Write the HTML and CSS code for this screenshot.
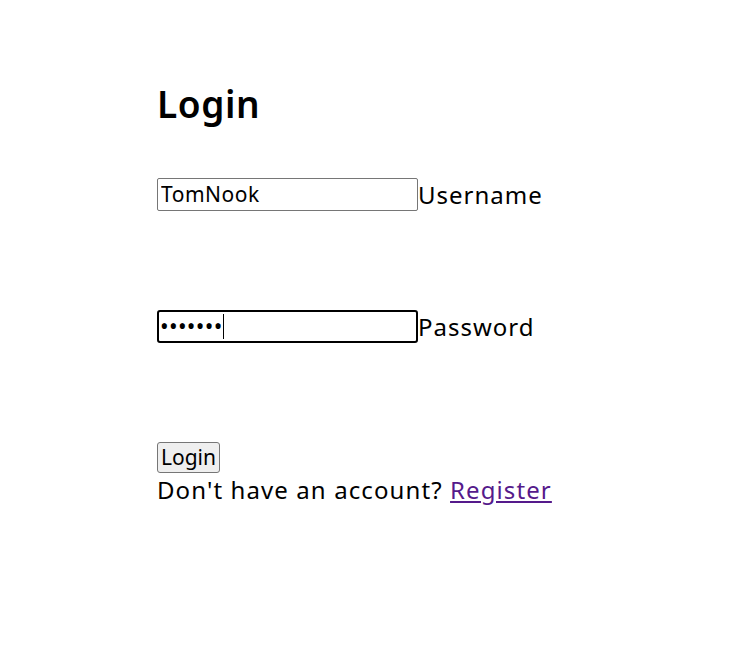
FILE: index.html
```html
<!DOCTYPE html>
<html lang="en">

<head>
    <meta charset="UTF-8">
    <meta name="viewport" content="width=device-width, initial-scale=1.0">
    <title>Login</title>

    <link rel="stylesheet" href="styles.css">

</head>

<body>
<div class="login-page">
  <h1>Login</h1>

  <form class="login-form">
    <!-- username -->
    <div class="field">
      <input type="text" id="username" class="text-input" value="TomNook" />
      <label for="username">Username</label>
    </div>

    <!-- password (active box, with the text caret) -->
    <div class="field">
      <div class="input-wrap">
        <input type="password" id="password" class="text-input is-focused" value="animals" />
        <span class="caret"></span>
      </div>
      <label for="password">Password</label>
    </div>

    <button type="submit" class="login-button">Login</button>
  </form>

  <p class="register-line">Don't have an account? <a href="#">Register</a></p>
</div>
</body>

</html>
```

FILE: styles.css
```css
* {
  box-sizing: border-box;
}

body {
  margin: 0;
  background: #fff;
  color: #000;
  font-family: "Noto Sans", sans-serif;
}

/* left column, like the original page */
.login-page {
  padding: 80px 0 0 157px;
}

h1 {
  margin: 0 0 50px 0;
  font-size: 37px;
  font-weight: 600;
  letter-spacing: 0.6px;
  line-height: 48px;
}

.field {
  display: flex;
  align-items: center;
  height: 32px;
  margin-bottom: 100px;
}

.input-wrap {
  position: relative;
  display: flex;
}

.text-input {
  width: 261px;
  height: 33px;
  margin: 0;
  padding: 1px 3px;
  border: 1px solid #767676;
  border-radius: 2px;
  font-family: inherit;
  font-size: 21px;
  letter-spacing: 0.5px;
  color: #000;
  background: #fff;
}

/* password box is the active one */
.is-focused {
  border: 2px solid #000;
  border-radius: 3px;
  outline: none;
  padding-left: 1px;
  font-size: 23px;
  letter-spacing: 0.3px;
}

.caret {
  position: absolute;
  left: 66px;
  top: 4px;
  width: 1px;
  height: 25px;
  background: #000;
}

.field label {
  font-size: 24px;
  letter-spacing: 1px;
}

.login-button {
  display: block;
  height: 31px;
  margin: 0;
  padding: 0 3px;
  font-family: inherit;
  font-size: 21px;
  line-height: 1;
  color: #000;
  background: #efefef;
  border: 1px solid #767676;
  border-radius: 3px;
}

.register-line {
  margin: 0;
  font-size: 24px;
  letter-spacing: 1.1px;
  line-height: 34px;
}

.register-line a {
  color: #551a8b;
}
```
